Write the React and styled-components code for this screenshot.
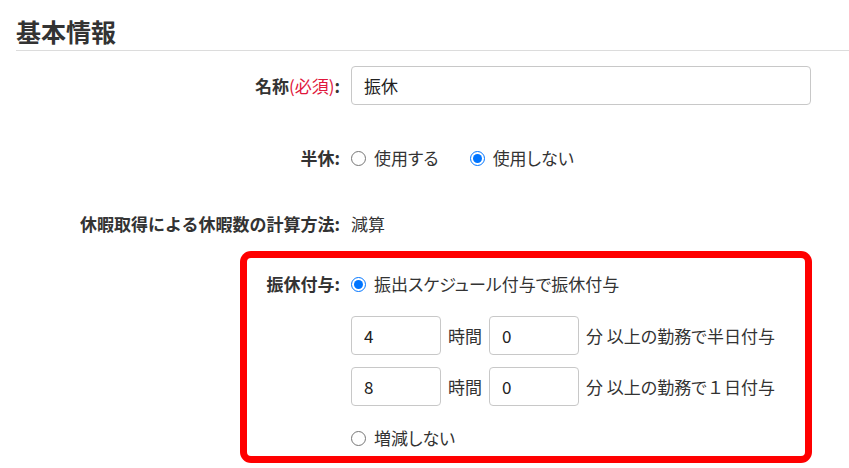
import React from "react";
import styled, { createGlobalStyle } from "styled-components";

const Global = createGlobalStyle`
  html, body { margin: 0; padding: 0; background: #fff; }
  body {
    font-family: "Noto Sans CJK JP", "Noto Sans", sans-serif;
    color: #333;
    font-size: 17px;
  }
  * { box-sizing: border-box; }
`;

const Page = styled.div`
  width: 849px;
  padding-left: 16px;
`;

const Title = styled.h2`
  margin: 0;
  padding: 13px 0 1px;
  font-size: 25px;
  line-height: 36px;
  font-weight: 700;
  color: #333;
  border-bottom: 1px solid #dcdcdc;
`;

const Form = styled.div`
  display: flex;
  flex-direction: column;
  width: 796px;
`;

const Row = styled.div`
  display: grid;
  grid-template-columns: ${(p) => p.$label}px 1fr;
  column-gap: 11px;
  align-items: ${(p) => (p.$top ? "start" : "center")};
  margin-top: ${(p) => p.$mt || 0}px;
`;

const Label = styled.div`
  text-align: right;
  font-weight: 700;
  line-height: 24px;
  white-space: nowrap;
  color: #333;
`;

const Required = styled.span`
  color: #e0163c;
  font-weight: 400;
  font-feature-settings: "palt";
`;

const Value = styled.div`
  line-height: 24px;
  color: #333;
  font-feature-settings: "palt";
`;

const TextInput = styled.input`
  width: ${(p) => p.$w}px;
  height: 39px;
  border: 1px solid #c8c8c8;
  border-radius: 4px;
  padding: 0 12px;
  font: inherit;
  font-size: 17px;
  color: #222;
  outline: none;
  background: #fff;
`;

const Options = styled.div`
  display: flex;
  align-items: center;
  gap: 31px;
`;

const Option = styled.label`
  display: flex;
  align-items: center;
  gap: 8px;
  line-height: 24px;
  color: #333;
  font-feature-settings: "palt";
`;

const Radio = styled.input.attrs({ type: "radio" })`
  margin: 0;
  width: 15px;
  height: 15px;
`;

const Highlight = styled.div`
  margin-top: 15px;
  margin-left: 224px;
  width: 572px;
  border: 7px solid #ff0000;
  border-radius: 11px;
  padding: 14px 0 6px;
`;

const Stack = styled.div`
  display: flex;
  flex-direction: column;
`;

const TimeRows = styled.div`
  display: flex;
  flex-direction: column;
  gap: 12px;
  margin: 20px 0;
`;

const TimeRow = styled.div`
  display: flex;
  align-items: center;
  gap: 7px;
  color: #333;
`;

const Unit = styled.span`
  white-space: nowrap;
  font-feature-settings: "palt";
`;

const FullWidth = styled.span`
  font-feature-settings: normal;
`;

export default function App() {
  return (
    <>
      <Global />
      <Page>
        <Title>基本情報</Title>
        <Form>
          <Row $label={324} $mt={15}>
            <Label>
              名称<Required>(必須)</Required>:
            </Label>
            <TextInput $w={460} defaultValue="振休" />
          </Row>
          <Row $label={324} $mt={41}>
            <Label>半休:</Label>
            <Options>
              <Option>
                <Radio name="half" />
                使用する
              </Option>
              <Option>
                <Radio name="half" defaultChecked />
                使用しない
              </Option>
            </Options>
          </Row>
          <Row $label={324} $mt={42}>
            <Label>休暇取得による休暇数の計算方法:</Label>
            <Value>減算</Value>
          </Row>
          <Highlight>
            <Row $label={93} $top>
              <Label>振休付与:</Label>
              <Stack>
                <Option>
                  <Radio name="grant" defaultChecked />
                  振出スケジュール付与で振休付与
                </Option>
                <TimeRows>
                  <TimeRow>
                    <TextInput $w={90} defaultValue="4" />
                    <Unit>時間</Unit>
                    <TextInput $w={90} defaultValue="0" />
                    <Unit>分 以上の勤務で半日付与</Unit>
                  </TimeRow>
                  <TimeRow>
                    <TextInput $w={90} defaultValue="8" />
                    <Unit>時間</Unit>
                    <TextInput $w={90} defaultValue="0" />
                    <Unit>
                      分 以上の勤務で<FullWidth>１</FullWidth>日付与
                    </Unit>
                  </TimeRow>
                </TimeRows>
                <Option>
                  <Radio name="grant" />
                  増減しない
                </Option>
              </Stack>
            </Row>
          </Highlight>
        </Form>
      </Page>
    </>
  );
}
